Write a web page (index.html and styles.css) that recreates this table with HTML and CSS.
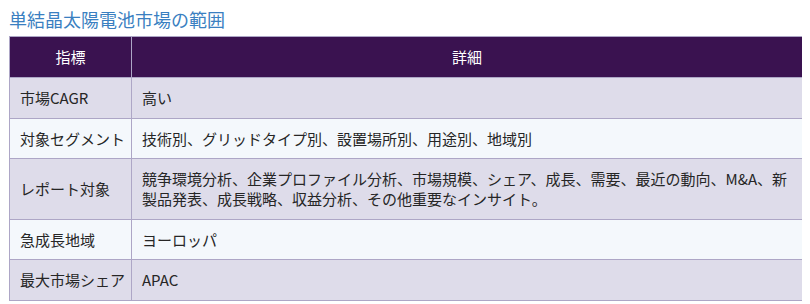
FILE: index.html
```html
<!DOCTYPE html>
<html lang="ja">
<head>
<meta charset="utf-8">
<link rel="stylesheet" href="styles.css">
</head>
<body>
<h2 class="title">単結晶太陽電池市場の範囲</h2>
<table class="scope">
  <colgroup><col class="c1"><col class="c2"></colgroup>
  <thead>
    <tr><th>指標</th><th>詳細</th></tr>
  </thead>
  <tbody>
    <tr><td class="key">市場CAGR</td><td>高い</td></tr>
    <tr><td class="key">対象セグメント</td><td>技術別、グリッドタイプ別、設置場所別、用途別、地域別</td></tr>
    <tr><td class="key">レポート対象</td><td>競争環境分析、企業プロファイル分析、市場規模、シェア、成長、需要、最近の動向、M&amp;A、新製品発表、成長戦略、収益分析、その他重要なインサイト。</td></tr>
    <tr><td class="key">急成長地域</td><td>ヨーロッパ</td></tr>
    <tr><td class="key">最大市場シェア</td><td>APAC</td></tr>
  </tbody>
</table>
</body>
</html>
```
FILE: styles.css
```css
body {
  margin: 8px 8px 8px 9px;
  background: #ffffff;
  font-family: "Noto Sans CJK JP", "Noto Sans", sans-serif;
  color: #262626;
}
.title {
  margin: 0 0 5px 0;
  font-size: 18px;
  line-height: 23px;
  font-weight: normal;
  color: #3a7fc1;
}
.scope {
  border-collapse: collapse;
  table-layout: fixed;
  width: 794px;
  font-size: 15px;
}
.c1 { width: 122px; }
.scope th, .scope td {
  border: 1px solid #ada6c6;
  line-height: 20px;
  text-align: left;
  vertical-align: middle;
}
.scope th {
  background: #3a1250;
  color: #ffffff;
  font-weight: normal;
  text-align: center;
  padding: 10px 10px;
}
.scope td {
  padding: 10px 10px 9.5px 10px;
}
.scope td.key {
  white-space: nowrap;
  padding-right: 2px;
}
.scope tbody tr:nth-child(odd) td { background: #dedcea; }
.scope tbody tr:nth-child(even) td { background: #f4f8fc; }
```
